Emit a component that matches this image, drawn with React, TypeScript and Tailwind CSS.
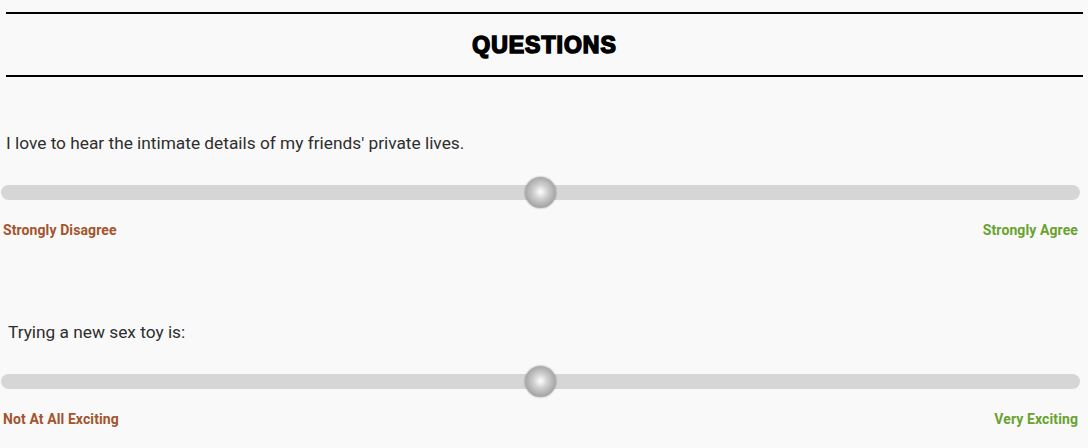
import React from "react";

function Slider() {
  return (
    <div className="relative mx-[1px] w-[1079px] h-[15px] rounded-full bg-[#d6d6d6]">
      <div
        className="absolute left-[524px] top-[-8px] w-[31px] h-[31px] rounded-full shadow-[0_0_2px_rgba(0,0,0,0.45)]"
        style={{ background: "radial-gradient(circle at 50% 48%, #ffffff 0%, #cfcfcf 32%, #a2a2a2 72%, #858585 100%)" }}
      />
    </div>
  );
}

function Question({ text, left, right, textPad }: { text: string; left: string; right: string; textPad: string }) {
  return (
    <div className="flex flex-col">
      <div className={`${textPad} h-[24px] leading-[24px] text-[17.3px] text-[#2e2e2e] font-['Roboto',sans-serif]`}>{text}</div>
      <div className="mt-[30px]">
        <Slider />
      </div>
      <div className="mt-[21px] flex justify-between pl-[3px] pr-[10px] text-[14px] leading-[18px] font-bold font-['Roboto',sans-serif] tracking-[0.1px]">
        <span className="text-[#a3542c]">{left}</span>
        <span className="text-[#6aa22f]">{right}</span>
      </div>
    </div>
  );
}

export default function App() {
  return (
    <div className="w-[1088px] h-[448px] bg-[#f9f9f9] overflow-hidden">
      <div className="pt-[12px] px-[6px] w-[1089px]">
        <div className="h-[65px] border-y-2 border-black flex items-center justify-center w-[1077px]">
          <span
            className="text-[23px] font-bold text-black tracking-[1px] font-['Liberation_Sans',sans-serif] pt-[1px]"
            style={{ WebkitTextStroke: "1.6px black" }}
          >
            QUESTIONS
          </span>
        </div>
      </div>
      <div className="mt-[54px]">
        <Question
          text="I love to hear the intimate details of my friends' private lives."
          left="Strongly Disagree"
          right="Strongly Agree"
          textPad="pl-[6px]"
        />
      </div>
      <div className="mt-[81px]">
        <Question
          text="Trying a new sex toy is:"
          left="Not At All Exciting"
          right="Very Exciting"
          textPad="pl-[8px]"
        />
      </div>
    </div>
  );
}
